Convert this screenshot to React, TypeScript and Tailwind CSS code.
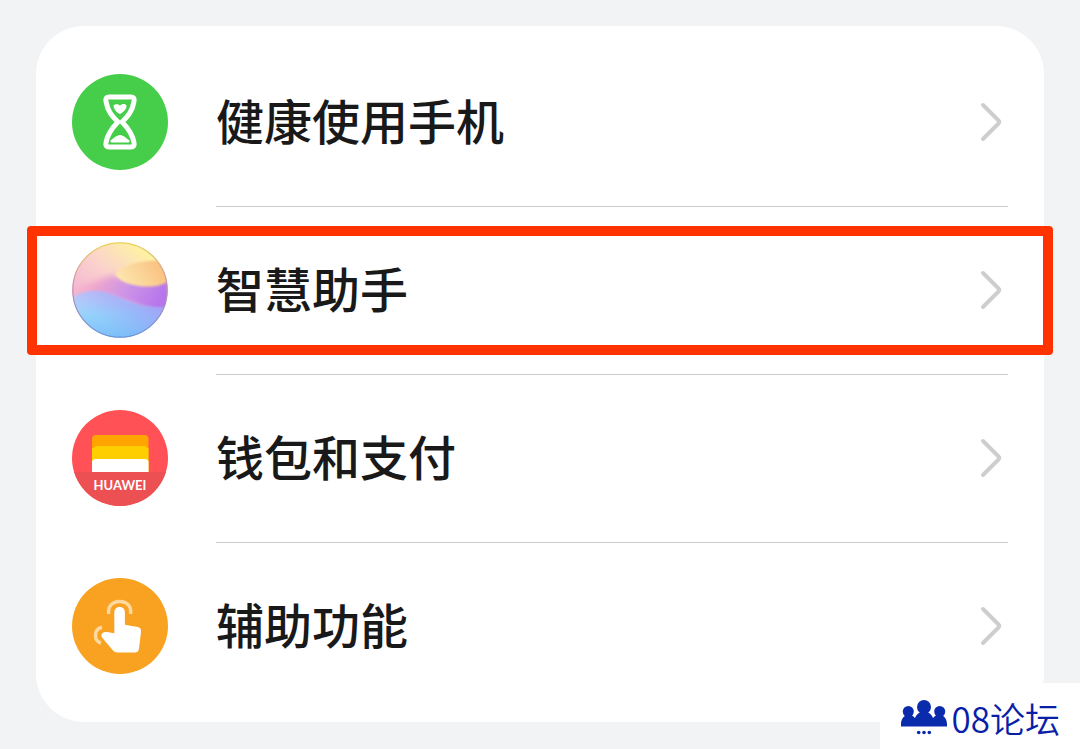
import type { ReactNode } from "react";

type SettingsItem = {
  id: string;
  label: string;
  icon: ReactNode;
  highlighted?: boolean;
};

function HourglassIcon() {
  return (
    <svg viewBox="0 0 96 96" className="size-24 shrink-0" aria-hidden="true">
      <circle cx="48" cy="48" r="48" fill="#46cd4a" />
      <path
        d="M37 23H59Q63 23 62 27.500C60.500 37 56 42 50 48C56 54 60.500 60 62 68.500Q63 73 59 73H37Q33 73 34 68.500C35.500 60 40 54 46 48C40 42 35.500 37 34 27.500Q33 23 37 23Z"
        fill="none"
        stroke="#fff"
        strokeWidth="5"
        strokeLinejoin="round"
      />
      <path
        d="M41.500 31.500C43 29.800 46.500 30 48 31.800C49.500 29.500 53 29.500 54.500 31.500C55 35 50.500 39 48 40C45 39 41.500 35 41.500 31.500Z"
        fill="#fff"
      />
      <path
        d="M38.500 66.500C41 65 44.500 61 48 61C51.500 61 55 65 57.500 66.500Q58 68.500 55.500 68.500H40.500Q38 68.500 38.500 66.500Z"
        fill="#fff"
      />
    </svg>
  );
}

function AssistantIcon() {
  return (
    <svg viewBox="0 0 96 96" className="size-24 shrink-0" aria-hidden="true">
      <defs>
        <clipPath id="orb">
          <circle cx="48" cy="48" r="47.500" />
        </clipPath>
        <linearGradient id="orb-sky" x1="0.150" y1="0.550" x2="0.650" y2="0">
          <stop offset="0" stopColor="#f5bbd2" />
          <stop offset="0.450" stopColor="#fbd3cc" />
          <stop offset="1" stopColor="#fdf2a2" />
        </linearGradient>
        <linearGradient id="orb-sun" x1="0" y1="0.600" x2="1" y2="0.300">
          <stop offset="0" stopColor="#fde8b0" />
          <stop offset="1" stopColor="#f9ba78" />
        </linearGradient>
        <linearGradient id="orb-band" x1="0" y1="0" x2="1" y2="0.200">
          <stop offset="0" stopColor="#f9b9cb" stopOpacity="0" />
          <stop offset="0.300" stopColor="#efa6cc" />
          <stop offset="0.600" stopColor="#cd94e6" />
          <stop offset="1" stopColor="#b574ec" />
        </linearGradient>
        <linearGradient id="orb-sea" x1="0.300" y1="0" x2="0.500" y2="1">
          <stop offset="0" stopColor="#c4cdf8" />
          <stop offset="0.450" stopColor="#93d2fb" />
          <stop offset="1" stopColor="#78b9f8" />
        </linearGradient>
        <linearGradient id="orb-violet" x1="0.400" y1="0.700" x2="1" y2="0.200">
          <stop offset="0" stopColor="#9c9cf8" stopOpacity="0" />
          <stop offset="1" stopColor="#a896f7" />
        </linearGradient>
        <linearGradient id="orb-rim" x1="0.500" y1="0" x2="0.500" y2="1">
          <stop offset="0" stopColor="#ecd35c" />
          <stop offset="0.450" stopColor="#c890ae" />
          <stop offset="1" stopColor="#6795d8" />
        </linearGradient>
        <filter id="orb-soft" x="-20%" y="-20%" width="140%" height="140%">
          <feGaussianBlur stdDeviation="3" />
        </filter>
        <filter id="orb-edge" x="-20%" y="-20%" width="140%" height="140%">
          <feGaussianBlur stdDeviation="0.900" />
        </filter>
      </defs>
      <g clipPath="url(#orb)">
        <rect width="96" height="96" fill="url(#orb-sky)" />
        <path
          d="M-4 46C14 42 26 39 36 34C54 34 76 34 100 34V72C70 72 50 54 30 56C18 54 8 56 -4 60Z"
          fill="url(#orb-band)"
          filter="url(#orb-soft)"
        />
        <path
          d="M43 32C52 22 70 17 100 19V37C90 45 76 46 62 43C52 41 46 37 43 32Z"
          fill="url(#orb-sun)"
          filter="url(#orb-edge)"
        />
        <g filter="url(#orb-edge)">
          <path
            d="M-4 58C8 50 22 46 36 51C54 57 68 68 100 65V100H-4Z"
            fill="url(#orb-sea)"
          />
          <path
            d="M-4 58C8 50 22 46 36 51C54 57 68 68 100 65V100H-4Z"
            fill="url(#orb-violet)"
          />
        </g>
      </g>
      <circle cx="48" cy="48" r="47.200" fill="none" stroke="url(#orb-rim)" strokeWidth="1.200" />
    </svg>
  );
}

function WalletIcon() {
  return (
    <svg viewBox="0 0 96 96" className="size-24 shrink-0" aria-hidden="true">
      <defs>
        <clipPath id="wallet">
          <circle cx="48" cy="48" r="48" />
        </clipPath>
      </defs>
      <g clipPath="url(#wallet)">
        <rect width="96" height="96" fill="#ff5156" />
        <rect y="62" width="96" height="34" fill="#ec5053" />
        <path d="M20 62V29Q20 25 24 25H72.500Q76.500 25 76.500 29V62Z" fill="#ffa400" />
        <path d="M20 62V38Q22 38 22.500 37Q23 36 25 36H71.500Q73.500 36 74 37Q74.500 38 76.500 38V62Z" fill="#ffce00" />
        <path d="M20 62V51.500Q20.500 49 23 49H73.500Q76 49 76.500 51.500V62Z" fill="#fff" />
        <text
          x="48"
          y="80"
          textAnchor="middle"
          fill="#fff"
          className="font-['Lato',sans-serif] text-[13px] font-bold"
        >
          HUAWEI
        </text>
      </g>
    </svg>
  );
}

function TouchIcon() {
  return (
    <svg viewBox="0 0 96 96" className="size-24 shrink-0" aria-hidden="true">
      <circle cx="48" cy="48" r="48" fill="#f9a120" />
      <path
        d="M42.300 34A5.300 5.300 0 0 1 52.900 34V46.700L66 49Q69.500 50 69 54L67 70.500Q66.500 74.500 63 74.500H45.500Q42.500 74.500 41 72.500L30 59.500Q28.500 57 30.500 55Q32 53.500 35 54L42.300 55.300Z"
        fill="#fff"
      />
      <g fill="none" stroke="#fdd9a0" strokeWidth="3.500">
        <path d="M36.700 36C35.500 28.500 40.500 23.500 47.700 23.500S59.900 28.500 58.500 36" />
        <path d="M30 49.300C25 50.500 23.500 54 23.500 57.500S25.500 64 29 65" />
      </g>
    </svg>
  );
}

function ChevronIcon() {
  return (
    <svg viewBox="0 0 24 40" className="h-10 w-6 shrink-0" fill="none" aria-hidden="true">
      <path
        d="M3 3L18.500 18.500Q20 20 18.500 21.500L3 37"
        stroke="#cecece"
        strokeWidth="4"
        strokeLinecap="round"
      />
    </svg>
  );
}

function PeopleIcon() {
  return (
    <svg viewBox="0 0 48 38" className="h-[38px] w-12 shrink-0" fill="#0a2bab" aria-hidden="true">
      <circle cx="8.300" cy="12.500" r="5.500" />
      <circle cx="39.700" cy="12.500" r="5.500" />
      <circle cx="24" cy="8" r="7" />
      <path d="M1 27.500V25C1 20.500 3.500 17.500 6 16H11C12.500 16.500 14 18 15 19C16 16 18.500 14 20.500 13H27.500C29.500 14 32 16 33 19C34 18 35.500 16.500 37 16H42C44.500 17.500 47 20.500 47 25V27.500Z" />
      <circle cx="18.700" cy="33.500" r="1.800" />
      <circle cx="24" cy="33.500" r="1.800" />
      <circle cx="29.300" cy="33.500" r="1.800" />
    </svg>
  );
}

const items: SettingsItem[] = [
  { id: "balance", label: "健康使用手机", icon: <HourglassIcon /> },
  { id: "assistant", label: "智慧助手", icon: <AssistantIcon />, highlighted: true },
  { id: "wallet", label: "钱包和支付", icon: <WalletIcon /> },
  { id: "accessibility", label: "辅助功能", icon: <TouchIcon /> },
];

function SettingsRow({ item, first }: { item: SettingsItem; first: boolean }) {
  return (
    <li className="relative">
      <a href={`#${item.id}`} className="flex h-42 items-center gap-12 px-9">
        {item.icon}
        <span
          className={`flex h-full min-w-0 flex-1 items-center justify-between border-t pr-1 pb-0.5 ${
            first ? "border-transparent" : "border-[#cbcbcb]"
          }`}
        >
          <span className="pb-1.5 text-5xl leading-[72px] font-medium text-[#191919]">
            {item.label}
          </span>
          <ChevronIcon />
        </span>
      </a>
      {item.highlighted && (
        <div className="pointer-events-none absolute -inset-x-[9px] top-5 bottom-[19px] rounded-[4px] border-10 border-[#ff3300]" />
      )}
    </li>
  );
}

export default function App() {
  return (
    <main className="relative min-h-screen bg-[#f1f3f5] px-9 py-[26px] font-['Noto_Sans_CJK_SC',sans-serif]">
      <ul className="rounded-[48px] bg-white py-3">
        {items.map((item, index) => (
          <SettingsRow key={item.id} item={item} first={index === 0} />
        ))}
      </ul>
      <div className="absolute right-0 bottom-0 flex h-[66px] items-center gap-1 bg-white pt-1 pr-5 pl-5">
        <PeopleIcon />
        <span className="text-[35px] leading-[52px] font-[350] text-[#0a1fa8]">08论坛</span>
      </div>
    </main>
  );
}
